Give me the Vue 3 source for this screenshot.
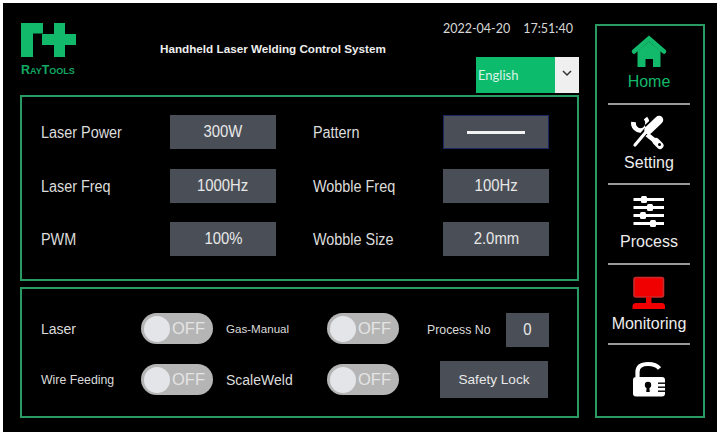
<script setup>
const params = [
  { label: 'Laser Power', value: '300W' },
  { label: 'Pattern', line: true },
  { label: 'Laser Freq', value: '1000Hz' },
  { label: 'Wobble Freq', value: '100Hz' },
  { label: 'PWM', value: '100%' },
  { label: 'Wobble Size', value: '2.0mm' },
]
</script>

<template>
  <div class="screen">
    <div class="main">
      <header class="header">
        <div class="brand">
          <svg class="logo" width="56" height="35" viewBox="0 0 56 35">
            <path d="M1 0H23V10.5H13V34H1Z" fill="#13b96b" />
            <path d="M34 0H45V11H56V22H45V34H34V22H22V11H34Z" fill="#13b96b" />
          </svg>
          <div class="brand-name">RayTools</div>
        </div>
        <div class="title">Handheld Laser Welding Control System</div>
        <div class="head-right">
          <div class="clock"><span>2022-04-20</span><span>17:51:40</span></div>
          <div class="lang">
            <span class="lang-name">English</span>
            <span class="lang-arrow">
              <svg width="10" height="7" viewBox="0 0 10 7"><path d="M1 1L5 5L9 1" fill="none" stroke="#333" stroke-width="1.5" /></svg>
            </span>
          </div>
        </div>
      </header>

      <section class="panel params">
        <template v-for="p in params" :key="p.label">
          <div class="param-label"><span>{{ p.label }}</span></div>
          <div v-if="p.line" class="value pattern"><i class="pattern-line"></i></div>
          <div v-else class="value"><span>{{ p.value }}</span></div>
        </template>
      </section>

      <section class="panel controls">
        <div class="ctl-label">Laser</div>
        <div class="toggle"><i class="knob"></i><span>OFF</span></div>
        <div class="ctl-label small">Gas-Manual</div>
        <div class="toggle"><i class="knob"></i><span>OFF</span></div>
        <div class="process">
          <span class="ctl-label small">Process No</span>
          <span class="value no"><span>0</span></span>
        </div>
        <div class="ctl-label small">Wire Feeding</div>
        <div class="toggle"><i class="knob"></i><span>OFF</span></div>
        <div class="ctl-label">ScaleWeld</div>
        <div class="toggle"><i class="knob"></i><span>OFF</span></div>
        <div class="safety">Safety Lock</div>
      </section>
    </div>

    <nav class="side">
      <div class="item home">
        <svg width="50" height="39" viewBox="0 0 50 39">
          <path d="M13.5 20L25 10.5L36.5 20V36H29V28H21.5V36H13.5Z" fill="#13b96b" />
          <path d="M10 20.5L25 7.5L40 20.5" fill="none" stroke="#13b96b" stroke-width="4.5" stroke-linecap="round" stroke-linejoin="miter" />
        </svg>
        <span>Home</span>
      </div>
      <div class="item">
        <svg width="50" height="41" viewBox="0 0 50 41">
          <path d="M9.5 12A7.5 7.5 0 0 0 18 20.5L36 35" fill="none" stroke="#fff" stroke-width="4.8" />
          <path d="M18 20.5A8 8 0 0 0 21.5 8" fill="none" stroke="#fff" stroke-width="4.2" />
          <path d="M36 35.5L32 31.5" stroke="#fff" stroke-width="7" stroke-linecap="round" />
          <circle cx="35.5" cy="34.5" r="1.5" fill="#000" />
          <path d="M23 20L10 35" stroke="#000" stroke-width="6" />
          <path d="M22 22L11 35" stroke="#fff" stroke-width="3.2" stroke-linecap="round" />
          <path d="M35 9.5L24 19.5" stroke="#000" stroke-width="11" />
          <path d="M35 10L24.5 20" stroke="#fff" stroke-width="8.5" stroke-linecap="round" />
        </svg>
        <span>Setting</span>
      </div>
      <div class="item">
        <svg width="50" height="40" viewBox="0 0 50 40">
          <g fill="#fff">
            <rect x="9.5" y="8" width="30.5" height="3" />
            <rect x="9.5" y="16" width="30.5" height="3" />
            <rect x="9.5" y="24" width="30.5" height="3" />
            <rect x="9.5" y="32" width="30.5" height="3" />
            <rect x="17" y="6" width="6" height="7" rx="1.5" />
            <rect x="23" y="14" width="6" height="7" rx="1.5" />
            <rect x="16" y="22" width="6" height="7" rx="1.5" />
            <rect x="26" y="30" width="6" height="7" rx="1.5" />
          </g>
        </svg>
        <span>Process</span>
      </div>
      <div class="item">
        <svg width="50" height="42" viewBox="0 0 50 42">
          <rect x="10" y="7.5" width="29.5" height="19.5" rx="2" fill="#f00000" stroke="#c92a2a" stroke-width="1.6" />
          <rect x="22" y="27" width="5.5" height="6" fill="#f00000" />
          <path d="M8.5 39V36.5Q8.5 33 12 33H38Q41 33 41 36.5V39Z" fill="#f00000" />
        </svg>
        <span>Monitoring</span>
      </div>
      <div class="item">
        <svg width="50" height="52" viewBox="0 0 50 52">
          <path d="M13.5 27V22Q13.5 14 24 14Q32 14 35.5 18.5" fill="none" stroke="#fff" stroke-width="4.2" />
          <rect x="9" y="27" width="32" height="19.5" rx="3" fill="#fff" />
          <circle cx="24" cy="35" r="3.2" fill="#000" />
          <path d="M22.8 36H25.2L25.8 42H22.2Z" fill="#000" />
          <g fill="#000">
            <rect x="34" y="32.5" width="7" height="1.4" />
            <rect x="34" y="36.5" width="7" height="1.4" />
            <rect x="34" y="40.5" width="7" height="1.4" />
          </g>
        </svg>
      </div>
    </nav>
  </div>
</template>

<style scoped>
.screen {
  margin: 3px 3px 0;
  height: 429px;
  padding-left: 17px;
  box-sizing: border-box;
  background: #000;
  display: flex;
  font-family: "Liberation Sans", Arial, sans-serif;
  color: #e2e2e2;
  overflow: hidden;
}
.main {
  width: 559px;
  flex: none;
}
.header {
  height: 92px;
  display: flex;
}
.brand {
  width: 140px;
  padding-top: 20px;
  flex: none;
}
.logo {
  display: block;
}
.brand-name {
  margin-top: 6px;
  margin-left: 1px;
  line-height: 12px;
  font-weight: 700;
  font-variant: small-caps;
  font-size: 12.5px;
  color: #13a863;
  white-space: nowrap;
}
.title {
  margin-top: 39px;
  font-size: 11.7px;
  line-height: 14px;
  font-weight: 700;
  color: #eee;
  white-space: nowrap;
}
.head-right {
  margin-left: auto;
  display: flex;
  flex-direction: column;
  align-items: flex-end;
}
.clock {
  display: flex;
  gap: 13px;
  margin: 18px 6px 0 0;
  font-family: Lato, sans-serif;
  font-size: 12.5px;
  line-height: 16px;
  color: #d8d8d8;
}
.lang {
  margin-top: 20px;
  width: 103px;
  height: 36px;
  display: flex;
  background: #0dbb6d;
}
.lang-name {
  flex: 1;
  padding-left: 2px;
  font-family: Lato, sans-serif;
  font-size: 13px;
  line-height: 36px;
  color: #d9f3e5;
}
.lang-arrow {
  width: 24px;
  background: #efefef;
  display: flex;
  justify-content: center;
  padding-top: 13px;
  box-sizing: border-box;
}
.lang-arrow svg {
  display: block;
}
.panel {
  border: 2px solid #2a9a63;
  box-sizing: border-box;
}
.params {
  height: 186px;
  padding: 18px 0 0 19px;
  display: grid;
  grid-template-columns: 129px 106px 167px 106px;
  grid-auto-rows: 34px;
  row-gap: 19.5px;
  align-items: center;
}
.param-label {
  font-size: 16px;
  color: #dcdcdc;
  white-space: nowrap;
}
.param-label span {
  display: inline-block;
  transform: translateY(1px) scaleX(0.9);
  transform-origin: left center;
}
.param-label:nth-child(4n + 3) {
  grid-column: 3;
  padding-left: 37px;
}
.value {
  height: 34px;
  background: #4a4f57;
  display: flex;
  align-items: center;
  justify-content: center;
  font-size: 16px;
  color: #e8e8e8;
}
.value span {
  display: inline-block;
  transform: scaleX(0.93);
}
.pattern {
  box-sizing: border-box;
  border: 1px solid #1b2560;
}
.pattern-line {
  width: 58px;
  height: 3px;
  background: #f2f2f2;
}
.controls {
  height: 131px;
  margin-top: 6px;
  padding: 21px 0 0 19px;
  display: grid;
  grid-template-columns: 100px 72px 114px 72px 150px;
  grid-template-rows: 37px 37px;
  row-gap: 14px;
  align-items: center;
}
.ctl-label {
  font-size: 14px;
  color: #dcdcdc;
}
.controls > .ctl-label:nth-child(3),
.controls > .ctl-label:nth-child(8) {
  padding-left: 13px;
}
.ctl-label.small {
  font-size: 12.3px;
}
.controls > .ctl-label.small:nth-child(3) {
  font-size: 11.6px;
}
.toggle {
  width: 72px;
  height: 31px;
  box-sizing: border-box;
  padding: 0 3px;
  border-radius: 16px;
  background: #b5b5b5;
  display: flex;
  align-items: center;
  gap: 2px;
}
.knob {
  width: 26px;
  height: 26px;
  border-radius: 50%;
  background: #e3e5e8;
  flex: none;
}
.toggle span {
  font-size: 16.5px;
  color: #e4e4e4;
}
.process {
  padding-left: 28px;
  display: flex;
  align-items: center;
  justify-content: space-between;
  transform: translateY(1px);
}
.no {
  width: 43px;
}
.safety {
  justify-self: end;
  width: 108px;
  height: 37px;
  margin-right: 1px;
  background: #4a4f57;
  font-size: 13.6px;
  line-height: 37px;
  text-align: center;
  color: #e8e8e8;
}
.side {
  width: 110px;
  height: 394px;
  margin: 21px 0 0 16px;
  flex: none;
  box-sizing: border-box;
  border: 2px solid #2a9a63;
  display: flex;
  flex-direction: column;
}
.item {
  height: 80px;
  margin: 0 13px 0 11px;
  padding-top: 5px;
  box-sizing: border-box;
  flex: none;
  border-bottom: 2px solid #9a9a9a;
  display: flex;
  flex-direction: column;
  align-items: center;
  font-size: 16px;
  line-height: 18px;
  color: #ededed;
}
.item svg {
  display: block;
  flex: none;
  margin-bottom: 3px;
}
.item span {
  white-space: nowrap;
}
.item:last-child {
  border-bottom: 0;
}
.home {
  height: 79px;
  color: #13b96b;
}
</style>

<style>
html,
body {
  margin: 0;
  background: #fff;
}
</style>
